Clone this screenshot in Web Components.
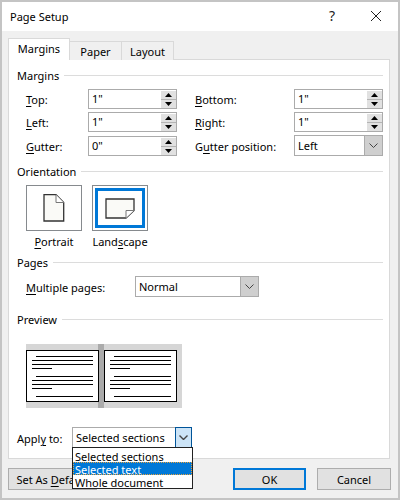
<!DOCTYPE html>
<html>
<head>
<meta charset="utf-8">
<title>Page Setup</title>
<style>
    html, body { margin: 0; padding: 0; background: #f0f0f0; }
    body { font: 11px "Noto Sans", "Open Sans", sans-serif; color: #000; }
    u { text-decoration-thickness: 1px; text-underline-offset: 2px; }
</style>
</head>
<body>
<page-setup-dialog>
    <dialog-title slot="title">Page Setup</dialog-title>

    <tab-strip slot="tabs">
        <tab-item active>Margins</tab-item>
        <tab-item>Paper</tab-item>
        <tab-item>Layout</tab-item>
    </tab-strip>

    <group-head>Margins</group-head>
    <margin-grid>
        <field-label><u>T</u>op:</field-label>
        <spin-box value='1"'></spin-box>
        <field-label><u>B</u>ottom:</field-label>
        <spin-box value='1"'></spin-box>
        <field-label><u>L</u>eft:</field-label>
        <spin-box value='1"'></spin-box>
        <field-label><u>R</u>ight:</field-label>
        <spin-box value='1"'></spin-box>
        <field-label><u>G</u>utter:</field-label>
        <spin-box value='0"'></spin-box>
        <field-label>G<u>u</u>tter position:</field-label>
        <combo-box value="Left" style="width:89px;margin-top:-1px"></combo-box>
    </margin-grid>

    <group-head style="margin-top:7px">Orientation</group-head>
    <orient-row>
        <orient-card kind="portrait"><u>P</u>ortrait</orient-card>
        <orient-card kind="landscape" selected>Land<u>s</u>cape</orient-card>
    </orient-row>

    <group-head style="margin-top:4px">Pages</group-head>
    <form-row style="margin:5px 0 0 9px">
        <field-label style="width:109px;height:18px;padding-top:2px"><u>M</u>ultiple pages:</field-label>
        <combo-box value="Normal" style="width:124px"></combo-box>
    </form-row>

    <group-head style="margin-top:15px">Preview</group-head>
    <page-preview></page-preview>

    <form-row style="margin:19px 0 0 0">
        <field-label style="width:55px;height:18px;padding-top:2px">Appl<u>y</u> to:</field-label>
        <combo-box value="Selected sections" open style="width:120px">
            <list-item>Selected sections</list-item>
            <list-item selected>Selected text</list-item>
            <list-item>Whole document</list-item>
        </combo-box>
    </form-row>

    <push-button slot="footer" style="width:89px">Set As <u>D</u>efault</push-button>
    <push-button slot="footer" primary style="width:73px;margin-left:auto">OK</push-button>
    <push-button slot="footer" style="width:74px;margin-left:11px">Cancel</push-button>
</page-setup-dialog>

<script>
class PageSetupDialog extends HTMLElement {
    constructor() {
        super();
        this.attachShadow({ mode: 'open' });
        this.shadowRoot.innerHTML = `
            <style>
                :host {
                    display: flex;
                    flex-direction: column;
                    box-sizing: border-box;
                    width: 400px;
                    height: 500px;
                    border: 2px solid #c4c4c4;
                    background: #f0f0f0;
                    overflow: hidden;
                }
                .panel {
                    position: relative;
                    z-index: 1;
                    box-sizing: border-box;
                    height: 400px;
                    margin: 0 8px 0 6px;
                    padding: 8px 6px 0 8px;
                    background: #fff;
                    border: 1px solid #d9d9d9;
                }
                .footer {
                    display: flex;
                    margin: 9px 7px 0 6px;
                }
            </style>
            <slot name="title"></slot>
            <slot name="tabs"></slot>
            <div class="panel"><slot></slot></div>
            <div class="footer"><slot name="footer"></slot></div>
        `;
    }
}

class DialogTitle extends HTMLElement {
    constructor() {
        super();
        this.attachShadow({ mode: 'open' });
        this.shadowRoot.innerHTML = `
            <style>
                :host {
                    display: flex;
                    align-items: center;
                    height: 29px;
                    padding-left: 8px;
                    background: #fff;
                }
                .name { flex: 1; margin-top: -1px; }
                .help { font-size: 14px; margin-right: 35px; margin-top: -3px; color: #222; }
                svg { display: block; margin-right: 16px; margin-top: -2px; }
            </style>
            <span class="name"><slot></slot></span>
            <span class="help">?</span>
            <svg width="12" height="12" viewBox="0 0 12 12">
                <path d="M1 1 L11 11 M11 1 L1 11" stroke="#222" stroke-width="1" fill="none"/>
            </svg>
        `;
    }
}

class TabStrip extends HTMLElement {
    constructor() {
        super();
        this.attachShadow({ mode: 'open' });
        this.shadowRoot.innerHTML = `
            <style>
                :host {
                    display: flex;
                    align-items: flex-end;
                    position: relative;
                    z-index: 2;
                    height: 22px;
                    margin: 7px 0 -1px 6px;
                }
            </style>
            <slot></slot>
        `;
    }
}

class TabItem extends HTMLElement {
    constructor() {
        super();
        this.attachShadow({ mode: 'open' });
        this.shadowRoot.innerHTML = `
            <style>
                :host {
                    display: flex;
                    align-items: center;
                    justify-content: center;
                    box-sizing: border-box;
                    width: 52px;
                    height: 19px;
                    background: #f0f0f0;
                    border: 1px solid #d9d9d9;
                    border-left: 0;
                    border-bottom: 0;
                }
                :host([active]) {
                    width: 62px;
                    height: 22px;
                    background: #fff;
                    border-left: 1px solid #d9d9d9;
                    padding-bottom: 3px;
                }
            </style>
            <slot></slot>
        `;
    }
}

class GroupHead extends HTMLElement {
    constructor() {
        super();
        this.attachShadow({ mode: 'open' });
        this.shadowRoot.innerHTML = `
            <style>
                :host {
                    display: flex;
                    align-items: center;
                    gap: 5px;
                    height: 16px;
                }
                span { margin-top: -1px; }
                i { flex: 1; height: 1px; margin-top: -1px; background: #dcdcdc; }
            </style>
            <span><slot></slot></span>
            <i></i>
        `;
    }
}

class MarginGrid extends HTMLElement {
    constructor() {
        super();
        this.attachShadow({ mode: 'open' });
        this.shadowRoot.innerHTML = `
            <style>
                :host {
                    display: grid;
                    grid-template-columns: 62px 107px 99px 89px;
                    grid-template-rows: 23px 24px 21px;
                    margin: 5px 0 0 9px;
                }
            </style>
            <slot></slot>
        `;
    }
}

class FieldLabel extends HTMLElement {
    constructor() {
        super();
        this.attachShadow({ mode: 'open' });
        this.shadowRoot.innerHTML = `
            <style>
                :host { display: flex; align-items: center; height: 20px; white-space: nowrap; }
            </style>
            <span><slot></slot></span>
        `;
    }
}

class SpinBox extends HTMLElement {
    constructor() {
        super();
        this.attachShadow({ mode: 'open' });
        this.shadowRoot.innerHTML = `
            <style>
                :host {
                    display: flex;
                    box-sizing: border-box;
                    width: 89px;
                    height: 20px;
                    border: 1px solid #ababab;
                    background: #fff;
                }
                .value { flex: 1; padding-left: 3px; line-height: 17px; }
                .btns {
                    display: flex;
                    flex-direction: column;
                    gap: 1px;
                    width: 15px;
                    margin: 1px 0 0 1px;
                    background: #b4b4b4;
                }
                .btn { flex: 1; display: flex; align-items: center; justify-content: center; background: #e1e1e1; }
                svg { display: block; }
            </style>
            <span class="value"></span>
            <div class="btns">
                <div class="btn"><svg width="7" height="4" viewBox="0 0 7 4"><path d="M3.5 0 L7 4 H0 Z" fill="#000"/></svg></div>
                <div class="btn"><svg width="7" height="4" viewBox="0 0 7 4"><path d="M0 0 H7 L3.5 4 Z" fill="#000"/></svg></div>
            </div>
        `;
        this.shadowRoot.querySelector('.value').textContent = this.getAttribute('value');
    }
}

class ComboBox extends HTMLElement {
    constructor() {
        super();
        this.attachShadow({ mode: 'open' });
        this.shadowRoot.innerHTML = `
            <style>
                :host {
                    display: flex;
                    position: relative;
                    box-sizing: border-box;
                    height: 21px;
                    border: 1px solid #ababab;
                    background: #fff;
                }
                .value { flex: 1; padding-left: 3px; line-height: 20px; white-space: nowrap; }
                .arrow {
                    display: flex;
                    align-items: center;
                    justify-content: center;
                    width: 17px;
                    background: #cfcfcf;
                    border-left: 1px solid #ababab;
                }
                :host([open]) .arrow {
                    width: 17px;
                    background: #cce4f7;
                    border: 1px solid #005499;
                    margin: -1px -1px -1px 0;
                    height: 21px;
                    box-sizing: border-box;
                }
                :host([open]) path { stroke-width: 1.4; }
                svg { display: block; }
                .list {
                    display: none;
                    position: absolute;
                    left: -1px;
                    right: -2px;
                    top: 19px;
                    box-sizing: border-box;
                    background: #fff;
                    border: 1px solid #222;
                    padding: 1px 0 0;
                }
                :host([open]) .list { display: block; }
            </style>
            <span class="value"></span>
            <div class="arrow">
                <svg width="9" height="5" viewBox="0 0 9 5"><path d="M0.5 0.5 L4.5 4.5 L8.5 0.5" fill="none" stroke="#444" stroke-width="1"/></svg>
            </div>
            <div class="list"><slot></slot></div>
        `;
        this.shadowRoot.querySelector('.value').textContent = this.getAttribute('value');
    }
}

class ListItem extends HTMLElement {
    constructor() {
        super();
        this.attachShadow({ mode: 'open' });
        this.shadowRoot.innerHTML = `
            <style>
                :host {
                    display: block;
                    box-sizing: border-box;
                    height: 13px;
                    padding-left: 2px;
                    line-height: 15px;
                    white-space: nowrap;
                }
                :host([selected]) {
                    background: #0078d7;
                    color: #fff;
                    outline: 1px dotted #e8a33d;
                    outline-offset: -1px;
                }
            </style>
            <slot></slot>
        `;
    }
}

class OrientRow extends HTMLElement {
    constructor() {
        super();
        this.attachShadow({ mode: 'open' });
        this.shadowRoot.innerHTML = `
            <style>
                :host { display: flex; gap: 10px; margin: 5px 0 0 9px; }
            </style>
            <slot></slot>
        `;
    }
}

class OrientCard extends HTMLElement {
    constructor() {
        super();
        this.attachShadow({ mode: 'open' });
        const portrait = this.getAttribute('kind') === 'portrait';
        const icon = portrait
            ? `<svg width="22" height="28" viewBox="0 0 22 28">
                   <path d="M1 .7 H13 L20.7 8.5 V27 H1 Z" fill="#fafaf7" stroke="#333" stroke-width="1.3"/>
                   <path d="M13 .7 V8.5 H20.7" fill="#fff" stroke="#777" stroke-width="1"/>
               </svg>`
            : `<svg width="30" height="21" viewBox="0 0 30 21">
                   <path d="M1 1 H29 V12.5 L21 20 H1 Z" fill="#fafaf7" stroke="#333" stroke-width="1.3"/>
                   <path d="M29 12.5 H21 V20" fill="#fff" stroke="#777" stroke-width="1"/>
               </svg>`;
        this.shadowRoot.innerHTML = `
            <style>
                :host { display: flex; flex-direction: column; align-items: center; width: 56px; }
                .box {
                    display: flex;
                    align-items: center;
                    justify-content: center;
                    box-sizing: border-box;
                    width: 56px;
                    height: 46px;
                    border: 1px solid #868a8e;
                }
                :host([selected]) .box { box-shadow: inset 0 0 0 2px #fff, inset 0 0 0 5px #0078d7; }
                .text { margin-top: 2px; height: 18px; line-height: 18px; white-space: nowrap; }
            </style>
            <div class="box">${icon}</div>
            <span class="text"><slot></slot></span>
        `;
    }
}

class FormRow extends HTMLElement {
    constructor() {
        super();
        this.attachShadow({ mode: 'open' });
        this.shadowRoot.innerHTML = `
            <style>
                :host { display: flex; align-items: center; }
            </style>
            <slot></slot>
        `;
    }
}

class PagePreview extends HTMLElement {
    constructor() {
        super();
        this.attachShadow({ mode: 'open' });
        const rows = [
            [356, true], [360], [364], [368, false, true],
            [376, true], [380], [384], [388, false, true],
            [396, true]
        ];
        const lines = (left) => rows.map(([y, indent, short]) => {
            const x1 = left + (indent ? 10 : 6);
            const x2 = left + (short ? 26 : 67);
            return `<path d="M${x1} ${y - 343.5} H${x2}"/>`;
        }).join('');
        this.shadowRoot.innerHTML = `
            <style>
                :host { display: block; width: 156px; height: 64px; margin: 16px 0 0 9px; }
                svg { display: block; }
            </style>
            <svg width="156" height="64" viewBox="0 0 156 64" shape-rendering="crispEdges">
                <rect width="156" height="64" fill="#d6d6d6"/>
                <rect x="72" width="6" height="64" fill="#ababab"/>
                <rect x=".5" y="6.5" width="72" height="51" fill="#fff" stroke="#000"/>
                <rect x="78.5" y="6.5" width="72" height="51" fill="#fff" stroke="#000"/>
                <g stroke="#000" stroke-width="1">${lines(0)}${lines(78)}</g>
            </svg>
        `;
    }
}

class PushButton extends HTMLElement {
    constructor() {
        super();
        this.attachShadow({ mode: 'open' });
        this.shadowRoot.innerHTML = `
            <style>
                :host {
                    display: flex;
                    align-items: center;
                    justify-content: center;
                    box-sizing: border-box;
                    height: 22px;
                    background: #e1e1e1;
                    border: 1px solid #adadad;
                    white-space: nowrap;
                }
                :host([primary]) { border: 2px solid #0078d7; }
            </style>
            <span><slot></slot></span>
        `;
    }
}

customElements.define('page-setup-dialog', PageSetupDialog);
customElements.define('dialog-title', DialogTitle);
customElements.define('tab-strip', TabStrip);
customElements.define('tab-item', TabItem);
customElements.define('group-head', GroupHead);
customElements.define('margin-grid', MarginGrid);
customElements.define('field-label', FieldLabel);
customElements.define('spin-box', SpinBox);
customElements.define('combo-box', ComboBox);
customElements.define('list-item', ListItem);
customElements.define('orient-row', OrientRow);
customElements.define('orient-card', OrientCard);
customElements.define('form-row', FormRow);
customElements.define('page-preview', PagePreview);
customElements.define('push-button', PushButton);
</script>
</body>
</html>
